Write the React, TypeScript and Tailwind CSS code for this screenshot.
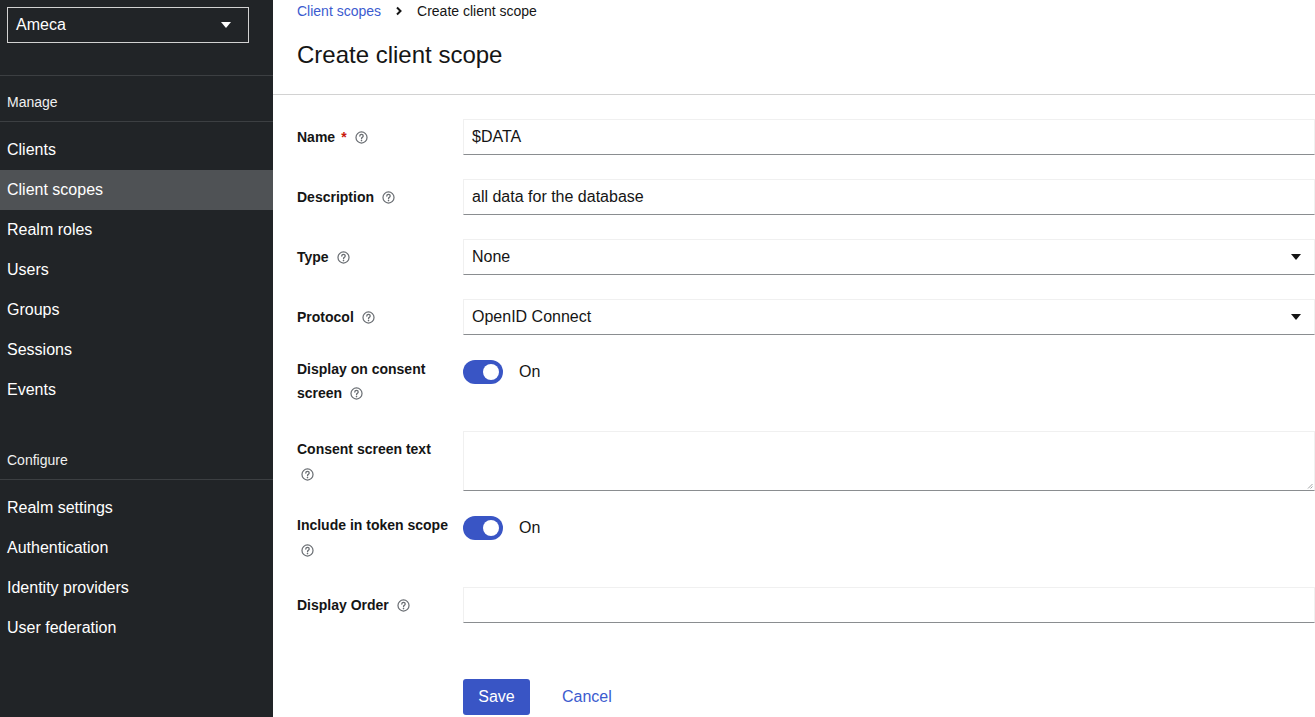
import React from "react";

const font = { fontFamily: '"Liberation Sans", Arial, sans-serif' };

function Help({ className = "" }: { className?: string }) {
  return (
    <svg width="13" height="13" viewBox="0 0 16 16" className={className} fill="none">
      <circle cx="8" cy="8" r="6.8" stroke="#6a6e73" strokeWidth="1.5" />
      <path d="M5.9 6.2c0-1.3 1-2 2.1-2s2.1.7 2.1 1.9c0 .9-.6 1.3-1.2 1.7-.5.3-.8.6-.8 1.2v.5" stroke="#6a6e73" strokeWidth="1.6" strokeLinecap="round" fill="none" />
      <circle cx="8" cy="11.8" r="1" fill="#6a6e73" />
    </svg>
  );
}

function Caret({ color }: { color: string }) {
  return (
    <svg width="10" height="6" viewBox="0 0 10 6">
      <path d="M0 0h10L5 6z" fill={color} />
    </svg>
  );
}

function Toggle() {
  return (
    <div className="flex items-center gap-4">
      <div className="w-[40px] h-[24px] rounded-full bg-[#3955c5] flex items-center justify-end pr-[4px]">
        <div className="w-[16px] h-[16px] rounded-full bg-white" />
      </div>
      <span className="text-[16px] text-[#151515]">On</span>
    </div>
  );
}

const inputCls =
  "h-[36px] w-full border border-[#f0f0f0] border-b-[#8a8d90] px-[8px] flex items-center text-[16px] text-[#151515] bg-white";

export default function App() {
  const manage = ["Clients", "Client scopes", "Realm roles", "Users", "Groups", "Sessions", "Events"];
  const configure = ["Realm settings", "Authentication", "Identity providers", "User federation"];
  return (
    <div style={font} className="w-[1315px] h-[717px] flex overflow-hidden bg-white">
      <aside className="w-[273px] shrink-0 bg-[#212427] text-white flex flex-col">
        <div className="pl-[7px] pr-[24px] pt-[7px]">
          <div className="h-[36px] border border-[#d2d2d2] flex items-center justify-between pl-[8px] pr-[17px]">
            <span className="text-[16px]">Ameca</span>
            <Caret color="#ffffff" />
          </div>
        </div>
        <div className="mt-[32px] border-t border-[#3c3f42]" />
        <div className="h-[45px] flex items-center pt-[7px] px-[7px] text-[14px] text-[#f0f0f0]">Manage</div>
        <div className="border-t border-[#3c3f42]" />
        <div className="pt-[8px]">
          {manage.map((m) => (
            <div
              key={m}
              className={`h-[40px] flex items-center px-[7px] text-[16px] ${m === "Client scopes" ? "bg-[#4f5255]" : ""}`}
            >
              {m}
            </div>
          ))}
        </div>
        <div className="mt-[31px] h-[38px] flex items-center px-[7px] text-[14px] text-[#f0f0f0]">Configure</div>
        <div className="border-t border-[#3c3f42]" />
        <div className="pt-[8px]">
          {configure.map((m) => (
            <div key={m} className="h-[40px] flex items-center px-[7px] text-[16px]">
              {m}
            </div>
          ))}
        </div>
      </aside>
      <main className="flex-1 flex flex-col">
        <div className="h-[95px] shrink-0 border-b border-[#d2d2d2] px-[24px]">
          <div className="flex items-center h-[22px] text-[14px]">
            <span className="text-[#3c5bcf]">Client scopes</span>
            <svg width="8" height="10" viewBox="0 0 8 10" className="mx-[14px]">
              <path d="M2 1.5L5.5 5 2 8.5" stroke="#151515" strokeWidth="2" fill="none" />
            </svg>
            <span className="text-[#151515]">Create client scope</span>
          </div>
          <h1 className="mt-[17px] text-[24px] leading-[32px] text-[#151515]">Create client scope</h1>
        </div>
        <div className="pl-[24px] pt-[24px] flex flex-col gap-[24px]">
          <Row label={<><span>Name</span><span className="text-[#c9190b] ml-[6px]">*</span><Help className="ml-[8px]" /></>}>
            <div className={inputCls}>$DATA</div>
          </Row>
          <Row label={<><span>Description</span><Help className="ml-[8px]" /></>}>
            <div className={inputCls}>all data for the database</div>
          </Row>
          <Row label={<><span>Type</span><Help className="ml-[8px]" /></>}>
            <div className={`${inputCls} justify-between pr-[13px]`}>
              <span>None</span>
              <Caret color="#151515" />
            </div>
          </Row>
          <Row label={<><span>Protocol</span><Help className="ml-[8px]" /></>}>
            <div className={`${inputCls} justify-between pr-[13px]`}>
              <span>OpenID Connect</span>
              <Caret color="#151515" />
            </div>
          </Row>
          <div className="flex h-[48px]">
            <div className="relative -top-[2px] w-[166px] shrink-0 text-[14px] font-bold text-[#151515] leading-[24px]">
              <div>Display on consent</div>
              <div className="flex items-center">
                screen <Help className="ml-[8px]" />
              </div>
            </div>
            <div className="pt-[1px]">
              <Toggle />
            </div>
          </div>
          <div className="flex">
            <div className="w-[166px] shrink-0 text-[14px] font-bold text-[#151515] leading-[24px] pt-[6px]">
              <div>Consent screen text</div>
              <div className="flex items-center h-[26px] pl-[4px]">
                <Help />
              </div>
            </div>
            <div className="relative flex-1 h-[60px] border border-[#f0f0f0] border-b-[#8a8d90]">
              <svg width="6" height="6" viewBox="0 0 6 6" className="absolute right-[1px] bottom-[1px]">
                <path d="M5.5 1L1 5.5M5.5 3.5L3.5 5.5" stroke="#8a8d90" strokeWidth="0.8" />
              </svg>
            </div>
          </div>
          <div className="flex h-[48px]">
            <div className="relative -top-[2px] w-[166px] shrink-0 text-[14px] font-bold text-[#151515] leading-[24px]">
              <div>Include in token scope</div>
              <div className="flex items-center h-[26px] pl-[4px]">
                <Help />
              </div>
            </div>
            <div className="pt-[1px]">
              <Toggle />
            </div>
          </div>
          <Row label={<><span>Display Order</span><Help className="ml-[8px]" /></>}>
            <div className={inputCls}></div>
          </Row>
          <div className="flex mt-[32px]">
            <div className="w-[166px] shrink-0" />
            <div className="flex items-center gap-[16px]">
              <button className="h-[36px] w-[67px] rounded-[3px] bg-[#3955c5] text-white text-[16px]">Save</button>
              <button className="h-[36px] px-[16px] text-[#3c5bcf] text-[16px]">Cancel</button>
            </div>
          </div>
        </div>
      </main>
    </div>
  );
}

function Row({ label, children }: { label: React.ReactNode; children: React.ReactNode }) {
  return (
    <div className="flex">
      <div className="w-[166px] shrink-0 h-[36px] flex items-center text-[14px] font-bold text-[#151515]">{label}</div>
      <div className="flex-1">{children}</div>
    </div>
  );
}
